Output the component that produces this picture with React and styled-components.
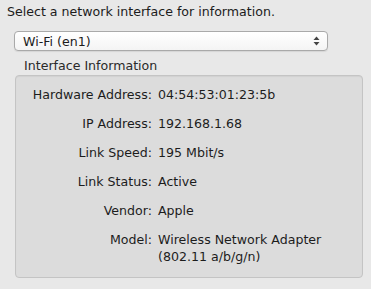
import React from 'react';
import styled, { createGlobalStyle } from 'styled-components';

const GlobalStyle = createGlobalStyle`
  html, body {
    margin: 0;
    padding: 0;
    background: #e8e8e8;
  }
  body {
    font-family: "DejaVu Sans", "Liberation Sans", sans-serif;
    font-size: 12.6px;
    color: #1c1c1c;
  }
`;

const Page = styled.div`
  width: 371px;
  height: 289px;
  padding: 4px 0 0 0;
  box-sizing: border-box;
  background: #e8e8e8;
`;

const Prompt = styled.div`
  margin-left: 7px;
  line-height: 16px;
`;

const Select = styled.div`
  margin: 11px 0 0 14px;
  width: 314px;
  height: 20px;
  box-sizing: border-box;
  border: 1px solid #a9a9a9;
  border-radius: 4px;
  background: linear-gradient(#ffffff, #f4f4f4);
  box-shadow: 0 1px 1px rgba(0, 0, 0, 0.08);
  display: flex;
  align-items: center;
  justify-content: space-between;
  padding: 0 7px 0 8px;
`;

const Arrows = styled.svg`
  width: 7px;
  height: 10px;
`;

const GroupTitle = styled.div`
  margin: 7px 0 0 24px;
  line-height: 16px;
  color: #2a2a2a;
`;

const GroupBox = styled.div`
  margin: 1px 0 0 15px;
  width: 348px;
  height: 203px;
  box-sizing: border-box;
  border: 1px solid #c4c4c4;
  border-radius: 4px;
  background: #dcdcdc;
  box-shadow: inset 0 1px 1px rgba(0, 0, 0, 0.05);
  padding: 10px 0 0 0;
  display: grid;
  grid-template-columns: 136px 1fr;
  column-gap: 6px;
  row-gap: 12px;
  align-content: start;
`;

const Label = styled.div`
  text-align: right;
  line-height: 17px;
`;

const Value = styled.div`
  line-height: 17px;
`;

const rows = [
  ['Hardware Address:', '04:54:53:01:23:5b'],
  ['IP Address:', '192.168.1.68'],
  ['Link Speed:', '195 Mbit/s'],
  ['Link Status:', 'Active'],
  ['Vendor:', 'Apple'],
  ['Model:', <>Wireless Network Adapter<br />(802.11 a/b/g/n)</>],
];

export default function App() {
  return (
    <Page>
      <GlobalStyle />
      <Prompt>Select a network interface for information.</Prompt>
      <Select>
        <span>Wi-Fi (en1)</span>
        <Arrows viewBox="0 0 7 10">
          <path d="M3.5 0.5 L6.5 4 H0.5 Z" fill="#444" />
          <path d="M3.5 9.5 L6.5 6 H0.5 Z" fill="#444" />
        </Arrows>
      </Select>
      <GroupTitle>Interface Information</GroupTitle>
      <GroupBox>
        {rows.map(([label, value]) => (
          <React.Fragment key={label}>
            <Label>{label}</Label>
            <Value>{value}</Value>
          </React.Fragment>
        ))}
      </GroupBox>
    </Page>
  );
}
